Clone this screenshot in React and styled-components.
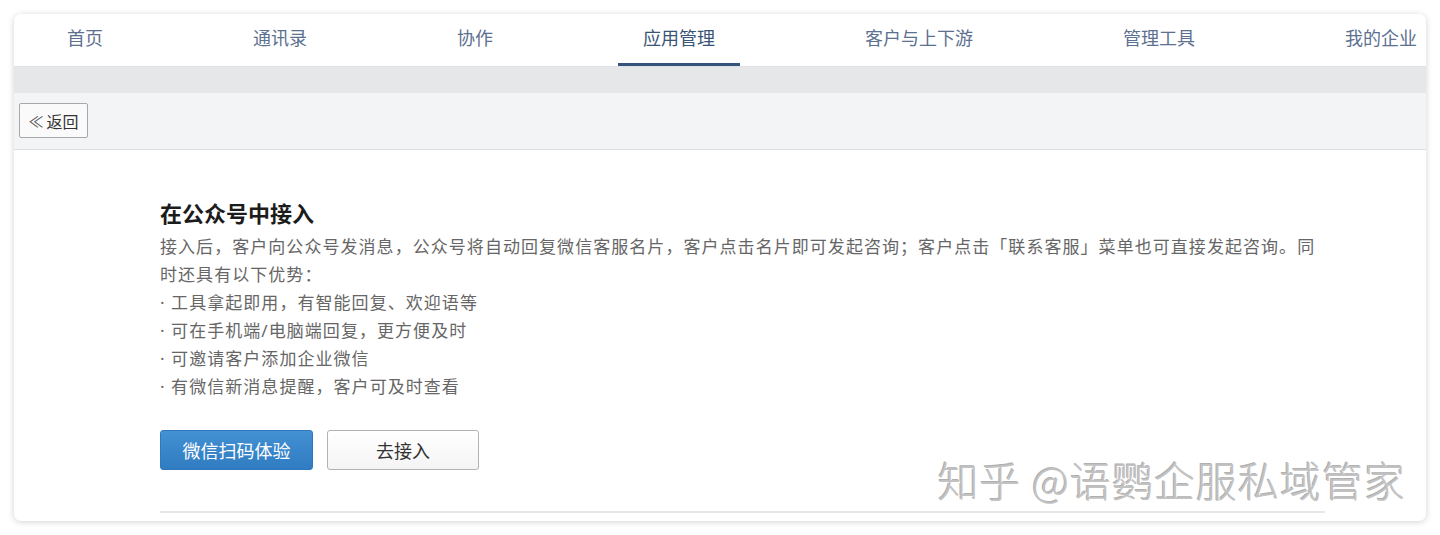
import React from "react";
import styled, { createGlobalStyle } from "styled-components";

const Global = createGlobalStyle`
  html, body { margin: 0; padding: 0; background: #ffffff; }
  body { font-family: "Noto Sans CJK SC", "Noto Sans", sans-serif; }
  * { box-sizing: border-box; }
`;

const Page = styled.div`
  padding: 14px;
`;

const Card = styled.div`
  position: relative;
  width: 1412px;
  height: 507px;
  background: #fff;
  border-radius: 7px;
  box-shadow: 0 1px 6px rgba(0, 0, 0, 0.18);
  overflow: hidden;
  display: flex;
  flex-direction: column;
`;

const Nav = styled.nav`
  height: 52px;
  display: flex;
  align-items: stretch;
  gap: 100px;
  padding-left: 28px;
  background: #fff;
  flex-shrink: 0;
`;

const Tab = styled.div`
  padding: 0 25px 4px;
  display: flex;
  align-items: center;
  font-size: 18px;
  color: ${(p) => (p.$active ? "#3a5475" : "#5c7090")};
  border-bottom: 3px solid ${(p) => (p.$active ? "#33557d" : "transparent")};
  white-space: nowrap;
`;

const Band = styled.div`
  height: 27px;
  background: #e6e7e9;
  border-top: 1px solid #e0e1e3;
  flex-shrink: 0;
`;

const Toolbar = styled.div`
  height: 57px;
  background: #f3f4f5;
  border-bottom: 1px solid #dcdddf;
  padding: 10px 5px;
  flex-shrink: 0;
`;

const BackButton = styled.button`
  height: 35px;
  width: 69px;
  border: 1px solid #a8a8a8;
  border-radius: 2px;
  background: #fafafa;
  font-family: inherit;
  font-size: 16px;
  color: #333;
  padding: 0;
  display: flex;
  align-items: center;
  justify-content: center;
  gap: 3px;
  cursor: pointer;
`;

const Chev = styled.span`
  font-size: 15px;
  color: #555;
`;

const Content = styled.div`
  flex: 1;
  padding: 47px 0 0 146px;
  width: 1316px;
`;

const Title = styled.h2`
  margin: 0;
  font-size: 22px;
  line-height: 30px;
  font-weight: 600;
  color: #1c1c1c;
`;

const Desc = styled.div`
  margin-top: 6px;
  font-family: "Noto Sans", "Noto Sans CJK SC", sans-serif;
  font-size: 17px;
  line-height: 28px;
  letter-spacing: 1.05px;
  color: #666;
`;

const Line = styled.div``;

const Actions = styled.div`
  display: flex;
  gap: 14px;
  margin-top: 29px;
`;

const Btn = styled.button`
  height: 40px;
  width: ${(p) => p.$w}px;
  border-radius: 3px;
  font-family: inherit;
  font-size: 18px;
  cursor: pointer;
  padding: 0;
  border: 1px solid ${(p) => (p.$primary ? "#2f78bb" : "#b3b3b3")};
  background: ${(p) =>
    p.$primary
      ? "linear-gradient(#4390d3, #2f7cc2)"
      : "linear-gradient(#ffffff, #f4f4f4)"};
  color: ${(p) => (p.$primary ? "#fff" : "#333")};
`;

const Divider = styled.div`
  margin-top: 41px;
  height: 2px;
  background: #e6e6e6;
  width: 1165px;
`;

const Watermark = styled.div`
  position: absolute;
  right: 20px;
  bottom: 17px;
  font-size: 41px;
  line-height: 50px;
  font-weight: 300;
  color: #c2c2c2;
  letter-spacing: 1px;
  text-shadow: 1px 1px 0 #fff, -1px -1px 0 #b0b0b0;
  white-space: nowrap;
  pointer-events: none;
`;

const tabs = ["首页", "通讯录", "协作", "应用管理", "客户与上下游", "管理工具", "我的企业"];

export default function App() {
  return (
    <>
      <Global />
      <Page>
        <Card>
          <Nav>
            {tabs.map((t) => (
              <Tab key={t} $active={t === "应用管理"}>
                {t}
              </Tab>
            ))}
          </Nav>
          <Band />
          <Toolbar>
            <BackButton>
              <Chev>≪</Chev>返回
            </BackButton>
          </Toolbar>
          <Content>
            <Title>在公众号中接入</Title>
            <Desc>
              <Line>
                接入后，客户向公众号发消息，公众号将自动回复微信客服名片，客户点击名片即可发起咨询；客户点击「联系客服」菜单也可直接发起咨询。同时还具有以下优势：
              </Line>
              <Line>· 工具拿起即用，有智能回复、欢迎语等</Line>
              <Line>· 可在手机端/电脑端回复，更方便及时</Line>
              <Line>· 可邀请客户添加企业微信</Line>
              <Line>· 有微信新消息提醒，客户可及时查看</Line>
            </Desc>
            <Actions>
              <Btn $primary $w={153}>微信扫码体验</Btn>
              <Btn $w={152}>去接入</Btn>
            </Actions>
            <Divider />
          </Content>
          <Watermark>知乎 @语鹦企服私域管家</Watermark>
        </Card>
      </Page>
    </>
  );
}
